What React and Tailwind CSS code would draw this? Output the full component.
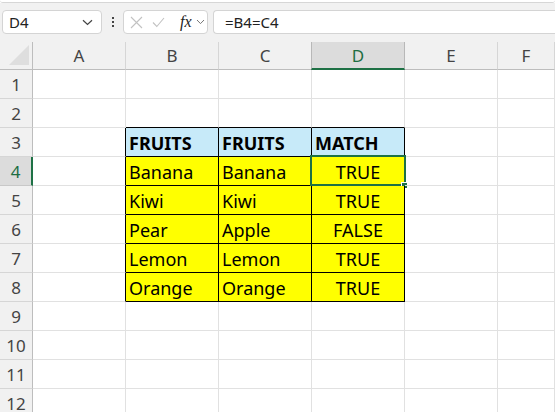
import React from "react";

const COLS = ["A", "B", "C", "D", "E", "F"];
const TABLE = {
  3: ["FRUITS", "FRUITS", "MATCH"],
  4: ["Banana", "Banana", "TRUE"],
  5: ["Kiwi", "Kiwi", "TRUE"],
  6: ["Pear", "Apple", "FALSE"],
  7: ["Lemon", "Lemon", "TRUE"],
  8: ["Orange", "Orange", "TRUE"],
};

const GREEN = "#1e7145";

function Cell({ r, c }) {
  // c: 0..5 for A..F
  const inTable = TABLE[r] && c >= 1 && c <= 3;
  const isHeader = r === 3;
  let cls = "relative h-[29px] border-r border-b ";
  if (inTable) {
    cls += "border-black ";
    cls += isHeader ? "bg-[#c7eaf9] " : "bg-[#ffff00] ";
  } else if (c === 0 && TABLE[r]) {
    cls += "border-b-[#e1e1e1] border-r-black ";
  } else if (r === 2 && c >= 1 && c <= 3) {
    cls += "border-r-[#e1e1e1] border-b-black ";
  } else {
    cls += "border-[#e1e1e1] ";
  }
  const text = inTable ? TABLE[r][c - 1] : null;
  const centered = inTable && c === 3 && !isHeader;
  return (
    <div className={cls}>
      {text && (
        <div
          className={
            "h-full pt-[1px] px-[3px] leading-[28px] text-[18px] text-black whitespace-nowrap " +
            (isHeader ? "font-bold " : "") +
            (centered ? "text-center" : "text-left")
          }
        >
          {text}
        </div>
      )}
      {r === 4 && c === 3 && (
        <>
          <div className="absolute -left-[2px] -top-[2px] w-[96px] h-[31px] border-2 border-[#1e7145]" />
          <div className="absolute left-[89px] top-[25px] w-[7px] h-[7px] bg-[#1e7145] border border-white" />
        </>
      )}
    </div>
  );
}

export default function App() {
  const rows = Array.from({ length: 12 }, (_, i) => i + 1);
  return (
    <div
      className="w-[555px] h-[412px] overflow-hidden bg-white select-none"
      style={{ fontFamily: '"Noto Sans", "Liberation Sans", sans-serif' }}
    >
      {/* top strip */}
      <div className="h-[3px] bg-white border-b border-[#d6d6d6] rounded-b-[3px]" />

      {/* formula bar */}
      <div className="h-[39px] bg-[#f1f1f1] flex items-start pt-[7px] pl-[2px]">
        <div className="w-[100px] h-[24px] bg-white border border-[#d4d4d4] rounded-[4px] flex items-center justify-between pl-[6px] pr-[8px]">
          <span className="text-[15px] text-[#222] leading-none">D4</span>
          <svg width="11" height="7" viewBox="0 0 11 7" fill="none">
            <path d="M1 1.2 L5.5 5.5 L10 1.2" stroke="#444" strokeWidth="1.2" />
          </svg>
        </div>
        <div className="w-[21px] h-[24px] flex flex-col items-center justify-center gap-[2px]">
          <div className="w-[2px] h-[2px] bg-[#444]" />
          <div className="w-[2px] h-[2px] bg-[#444]" />
          <div className="w-[2px] h-[2px] bg-[#444]" />
        </div>
        <div className="w-[85px] h-[24px] bg-white border border-[#d4d4d4] rounded-[4px] flex items-center pl-[6px]">
          <svg width="13" height="13" viewBox="0 0 13 13" fill="none">
            <path d="M1 1 L12 12 M12 1 L1 12" stroke="#c2c2c2" strokeWidth="1.1" />
          </svg>
          <svg className="ml-[9px]" width="13" height="11" viewBox="0 0 13 11" fill="none">
            <path d="M1 5.5 L4.8 9.5 L12 1" stroke="#c2c2c2" strokeWidth="1.1" />
          </svg>
          <span
            className="ml-[15px] text-[16px] italic text-[#222] leading-none"
            style={{ fontFamily: '"Liberation Serif", serif' }}
          >
            fx
          </span>
          <svg className="ml-[4px]" width="9" height="6" viewBox="0 0 9 6" fill="none">
            <path d="M1 1 L4.5 4.6 L8 1" stroke="#777" strokeWidth="1" />
          </svg>
        </div>
        <div className="ml-[5px] flex-1 h-[24px] bg-white border border-r-0 border-[#d4d4d4] rounded-l-[4px] flex items-center pl-[11px]">
          <span className="text-[15px] text-[#222] leading-none">=B4=C4</span>
        </div>
      </div>

      {/* grid */}
      <div className="grid grid-cols-[33px_93px_93px_93px_93px_93px_1fr]">
        {/* corner */}
        <div className="relative h-[28px] bg-[#f1f1f1] border-r border-b border-[#bdbdbd] flex items-end justify-end pr-[3px] pb-[4px]">
          <svg width="20" height="20" viewBox="0 0 20 20">
            <path d="M20 0 L20 20 L0 20 Z" fill="#dedede" />
          </svg>
        </div>
        {COLS.map((col, i) => {
          const sel = col === "D";
          return (
            <div
              key={col}
              className={
                "h-[28px] flex items-center justify-center text-[17px] leading-none " +
                (sel
                  ? "bg-[#dcdcdc] text-[#1e6e42] border-r border-r-[#b8b8b8] border-l border-l-[#b8b8b8] -ml-[1px] border-b-2 border-b-[#1e7145]"
                  : "bg-[#f1f1f1] text-[#444] border-b border-b-[#bdbdbd] border-r border-r-[#d6d6d6]")
              }
            >
              {col}
            </div>
          );
        })}

        {rows.map((r) => (
          <React.Fragment key={r}>
            <div
              className={
                "h-[29px] flex items-center justify-center text-[17px] leading-none " +
                (r === 4
                  ? "bg-[#dcdcdc] text-[#1e6e42] border-r-2 border-r-[#1e7145] border-b border-b-[#c8c8c8]"
                  : "bg-[#f1f1f1] text-[#444] border-r border-r-[#bdbdbd] border-b border-b-[#d6d6d6]")
              }
            >
              {r}
            </div>
            {COLS.map((_, c) => (
              <Cell key={c} r={r} c={c} />
            ))}
          </React.Fragment>
        ))}
      </div>
    </div>
  );
}
